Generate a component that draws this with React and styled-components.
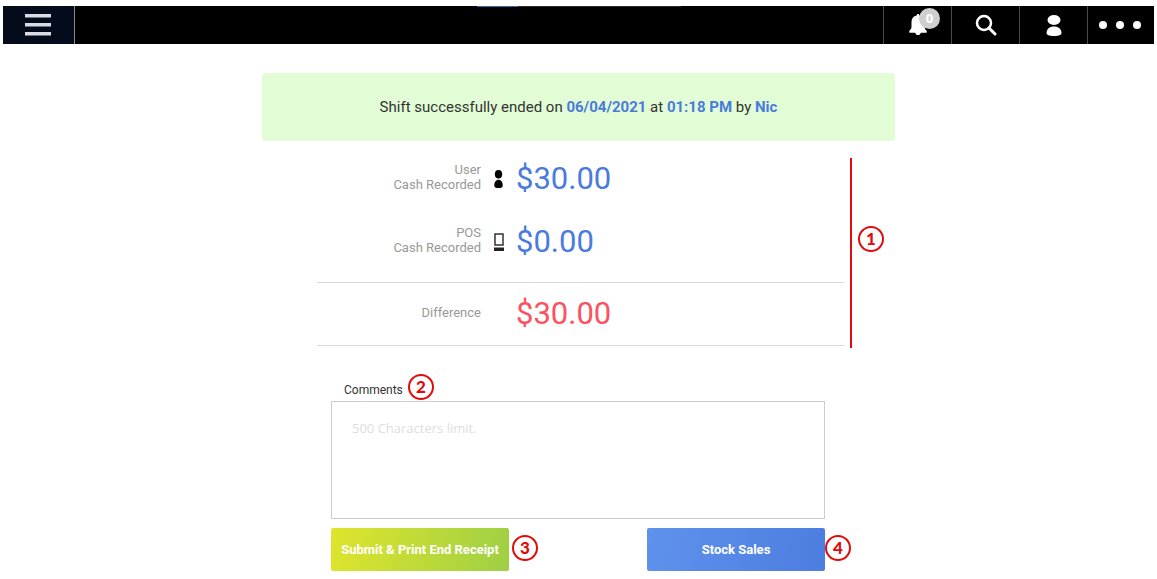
import React, { useState } from 'react';
import styled, { ThemeProvider, createGlobalStyle } from 'styled-components';

const theme = {
  colors: {
    blue: '#4a7bdc',
    red: '#fb5160',
    marker: '#e00b0b',
    label: '#999999',
    text: '#333333',
    line: '#d9d9d9',
    banner: '#e2fdd5',
  },
  fonts: {
    main: 'Roboto, sans-serif',
    marker: 'Lato, sans-serif',
    field: '"Open Sans", sans-serif',
  },
};

const GlobalStyle = createGlobalStyle`
  * {
    box-sizing: border-box;
  }

  body {
    margin: 0;
    background: #fff;
    color: ${({ theme }) => theme.colors.text};
    font-family: ${({ theme }) => theme.fonts.main};
  }
`;

const Page = styled.div`
  padding: 6px 3px 0;
`;

const TopBar = styled.header`
  position: relative;
  display: flex;
  justify-content: space-between;
  height: 38px;
  background: #000;

  /* loading strip along the top edge */
  &::before {
    content: '';
    position: absolute;
    top: 0;
    left: 474px;
    width: 204px;
    height: 1px;
    background: linear-gradient(to right, #2f6ea3 41px, #2a2a2a 41px);
  }
`;

const BarButton = styled.button`
  position: relative;
  display: flex;
  align-items: center;
  justify-content: center;
  width: 68px;
  padding: 0;
  border: 0;
  border-left: 1px solid #4a4a4a;
  background: transparent;
  color: #fff;
  cursor: pointer;
`;

const MenuButton = styled(BarButton)`
  width: 72px;
  padding-right: 1px;
  border-left: 0;
  border-right: 1px solid #8a8a8a;
  background: #040b1a;
`;

const MoreButton = styled(BarButton)`
  width: 67px;
  padding-right: 3px;
`;

const BarActions = styled.nav`
  display: flex;
`;

const Badge = styled.span`
  position: absolute;
  top: 2px;
  left: 35px;
  width: 21px;
  height: 21px;
  border-radius: 50%;
  background: #cfcfcf;
  font: 700 13px/21px ${({ theme }) => theme.fonts.field};
  text-align: center;
`;

const Main = styled.main`
  max-width: 633px;
  margin: 29px auto 0;
`;

const Banner = styled.p`
  margin: 0;
  padding: 24px 16px;
  border-radius: 4px;
  background: ${({ theme }) => theme.colors.banner};
  font-size: 15px;
  line-height: 20px;
  text-align: center;

  strong {
    color: ${({ theme }) => theme.colors.blue};
    font-weight: 700;
  }
`;

const Summary = styled.section`
  position: relative;
  margin: 6px 51px 0 55px;
`;

const Recorded = styled.div`
  padding-bottom: 9px;
  border-bottom: 1px solid ${({ theme }) => theme.colors.line};
`;

const Difference = styled.div`
  border-bottom: 1px solid ${({ theme }) => theme.colors.line};
`;

const Row = styled.div`
  display: grid;
  grid-template-columns: 164px 35px 1fr;
  align-items: center;
  height: ${({ $short }) => ($short ? '62px' : '63px')};
`;

const RowLabel = styled.span`
  padding-bottom: 4px;
  color: ${({ theme }) => theme.colors.label};
  font-size: 13px;
  line-height: 15px;
  text-align: right;
`;

const RowIcon = styled.span`
  display: flex;
  justify-content: center;
  color: #000;
`;

const Amount = styled.span`
  color: ${({ theme, $negative }) => ($negative ? theme.colors.red : theme.colors.blue)};
  font-size: 31px;
  line-height: 36px;
`;

const Marker = styled.span`
  flex: none;
  width: 26px;
  height: 26px;
  border: 2px solid ${({ theme }) => theme.colors.marker};
  border-radius: 50%;
  background: #fff;
  color: ${({ theme }) => theme.colors.marker};
  font: 900 17px/22px ${({ theme }) => theme.fonts.marker};
  text-align: center;
`;

const SummaryMarker = styled.div`
  position: absolute;
  top: 11px;
  bottom: -2px;
  left: calc(100% + 6px);
  display: flex;
  align-items: center;
  padding: 0 0 28px 6px;
  border-left: 2px solid ${({ theme }) => theme.colors.marker};
`;

const Form = styled.form`
  margin: 26px 70px 0 69px;
`;

const FormHead = styled.div`
  display: flex;
  align-items: center;
  gap: 5px;
  height: 29px;
  padding-left: 13px;
`;

const Label = styled.label`
  padding-top: 6px;
  font-size: 12px;
  line-height: 16px;
`;

const TextArea = styled.textarea`
  display: block;
  width: 100%;
  height: 118px;
  padding: 17px 20px;
  border: 1px solid #cccccc;
  outline: none;
  resize: none;
  color: ${({ theme }) => theme.colors.text};
  font: 13px/18px ${({ theme }) => theme.fonts.field};

  &::placeholder {
    color: #dedede;
  }
`;

const Buttons = styled.div`
  display: flex;
  justify-content: space-between;
  margin-top: 9px;
`;

const ButtonSlot = styled.div`
  position: relative;
  width: 178px;

  ${Marker} {
    position: absolute;
    top: 7px;
    left: ${({ $gap }) => `calc(100% + ${$gap})`};
  }
`;

const Button = styled.button`
  width: 100%;
  height: 43px;
  padding: 0;
  border: 0;
  border-radius: 2px;
  background: ${({ $primary }) =>
    $primary
      ? 'linear-gradient(100deg, #dfe52c, #9fcf45)'
      : 'linear-gradient(100deg, #5f92ec, #4c7de0)'};
  color: #fff;
  font: 700 13px/16px ${({ theme }) => theme.fonts.main};
  white-space: nowrap;
  cursor: pointer;
`;

const MenuIcon = () => (
  <svg width="26" height="22" viewBox="0 0 26 22" fill="#d9dce4" aria-hidden="true">
    <path d="M0 0h26v3.500H0zM0 9h26v3.500H0zM0 18h26v3.500H0z" />
  </svg>
);

const BellIcon = () => (
  <svg width="18" height="22" viewBox="0 0 18 22" fill="currentColor" aria-hidden="true">
    <path d="M9 0c.9 0 1.400.6 1.400 1.500C13.700 2.300 15.500 4.600 15.500 8v4.500c0 1.800.7 3.200 2.200 4.200v2H11.800c-.4 1.600-1.400 2.300-2.800 2.300s-2.400-.7-2.800-2.300H.3v-2C1.800 15.700 2.500 14.300 2.500 12.500V8c0-3.400 1.800-5.700 5.100-6.500C7.600.6 8.100 0 9 0z" />
  </svg>
);

const SearchIcon = () => (
  <svg width="22" height="22" viewBox="0 0 22 22" fill="none" stroke="currentColor" aria-hidden="true">
    <circle cx="9" cy="9" r="7" strokeWidth="2.500" />
    <path d="M14 14l6 6" strokeWidth="3" strokeLinecap="round" />
  </svg>
);

const PersonIcon = ({ width, height }) => (
  <svg width={width} height={height} viewBox="0 0 16 21" preserveAspectRatio="none" fill="currentColor" aria-hidden="true">
    <ellipse cx="8" cy="5" rx="6.500" ry="5" />
    <path d="M.5 18c0-3.800 3-6.500 7.500-6.500s7.500 2.700 7.500 6.500c0 2-2.500 3-7.500 3S.5 20 .5 18z" />
  </svg>
);

const MoreIcon = () => (
  <svg width="44" height="8" viewBox="0 0 44 8" fill="currentColor" aria-hidden="true">
    <circle cx="5" cy="4" r="4" />
    <circle cx="22" cy="4" r="4" />
    <circle cx="39" cy="4" r="4" />
  </svg>
);

const TerminalIcon = () => (
  <svg width="10" height="18" viewBox="0 0 10 18" aria-hidden="true">
    <rect x="1" y="1" width="8" height="11" fill="none" stroke="#333" strokeWidth="1.500" />
    <path d="M0 14.500h10v3.500H0z" fill="#222" />
  </svg>
);

const App = () => {
  const [comments, setComments] = useState('');

  const handleSubmit = event => {
    event.preventDefault();
  };

  return (
    <ThemeProvider theme={theme}>
      <GlobalStyle />
      <Page>
        <TopBar>
          <MenuButton type="button" aria-label="Menu">
            <MenuIcon />
          </MenuButton>
          <BarActions>
            <BarButton type="button" aria-label="Notifications">
              <BellIcon />
              <Badge>0</Badge>
            </BarButton>
            <BarButton type="button" aria-label="Search">
              <SearchIcon />
            </BarButton>
            <BarButton type="button" aria-label="Account">
              <PersonIcon width={16} height={21} />
            </BarButton>
            <MoreButton type="button" aria-label="More">
              <MoreIcon />
            </MoreButton>
          </BarActions>
        </TopBar>

        <Main>
          <Banner>
            Shift successfully ended on <strong>06/04/2021</strong> at <strong>01:18 PM</strong> by{' '}
            <strong>Nic</strong>
          </Banner>

          <Summary>
            <Recorded>
              <Row>
                <RowLabel>
                  User
                  <br />
                  Cash Recorded
                </RowLabel>
                <RowIcon>
                  <PersonIcon width={9} height={18} />
                </RowIcon>
                <Amount>$30.00</Amount>
              </Row>
              <Row>
                <RowLabel>
                  POS
                  <br />
                  Cash Recorded
                </RowLabel>
                <RowIcon>
                  <TerminalIcon />
                </RowIcon>
                <Amount>$0.00</Amount>
              </Row>
            </Recorded>
            <Difference>
              <Row $short>
                <RowLabel>Difference</RowLabel>
                <RowIcon />
                <Amount $negative>$30.00</Amount>
              </Row>
            </Difference>
            <SummaryMarker>
              <Marker>1</Marker>
            </SummaryMarker>
          </Summary>

          <Form onSubmit={handleSubmit}>
            <FormHead>
              <Label htmlFor="comments">Comments</Label>
              <Marker>2</Marker>
            </FormHead>
            <TextArea
              id="comments"
              maxLength={500}
              placeholder="500 Characters limit."
              value={comments}
              onChange={event => setComments(event.target.value)}
            />
            <Buttons>
              <ButtonSlot $gap="3px">
                <Button type="submit" $primary>
                  Submit &amp; Print End Receipt
                </Button>
                <Marker>3</Marker>
              </ButtonSlot>
              <ButtonSlot $gap="0px">
                <Button type="button">Stock Sales</Button>
                <Marker>4</Marker>
              </ButtonSlot>
            </Buttons>
          </Form>
        </Main>
      </Page>
    </ThemeProvider>
  );
};

export default App;
